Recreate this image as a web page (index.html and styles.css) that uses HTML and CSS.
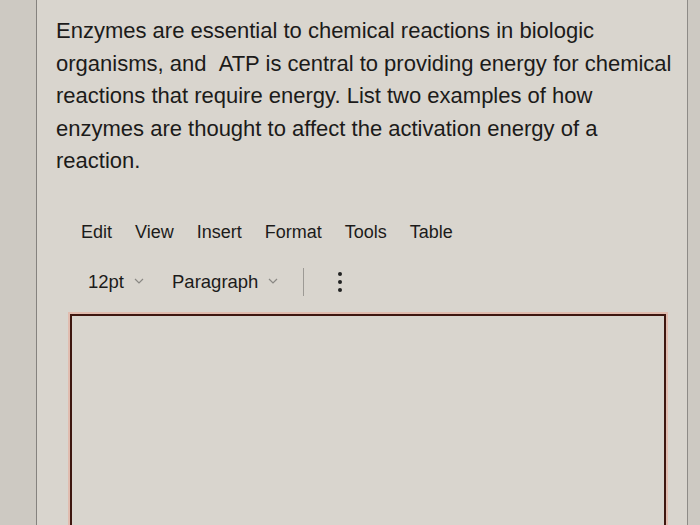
FILE: index.html
```html
<!DOCTYPE html>
<html lang="en">
<head>
    <meta charset="UTF-8">
    <meta name="viewport" content="width=device-width, initial-scale=1.0">
    <title>Question</title>
    <link rel="stylesheet" href="styles.css">
</head>
<body>
    <div class="panel">
        <p class="question">
            Enzymes are essential to chemical reactions in biologic<br>
            organisms, and &nbsp;ATP is central to providing energy for chemical<br>
            reactions that require energy. List two examples of how<br>
            enzymes are thought to affect the activation energy of a<br>
            reaction.
        </p>

        <div class="menu">
            <span>Edit</span>
            <span>View</span>
            <span>Insert</span>
            <span>Format</span>
            <span>Tools</span>
            <span>Table</span>
        </div>

        <div class="toolbar">
            <span class="drop size">12pt
                <svg class="chev" width="10" height="6" viewBox="0 0 10 6"><path d="M1 1l4 4 4-4" fill="none" stroke="#8a8884" stroke-width="1.2"/></svg>
            </span>
            <span class="drop para">Paragraph
                <svg class="chev" width="10" height="6" viewBox="0 0 10 6"><path d="M1 1l4 4 4-4" fill="none" stroke="#8a8884" stroke-width="1.2"/></svg>
            </span>
            <span class="sep"></span>
            <span class="more"><i></i><i></i><i></i></span>
        </div>

        <div class="editor"></div>
    </div>
</body>
</html>
```
FILE: styles.css
```css
body {
    margin: 0;
    background-color: #cdc9c2;
    font-family: "Liberation Sans", Arial, sans-serif;
    color: #1c1b1a;
    height: 525px;
    overflow: hidden;
}
.panel {
    margin-left: 36px;
    width: 652px;
    height: 525px;
    background-color: #d9d5ce;
    border-left: 1px solid #85827e;
    border-right: 1px solid #8e8b87;
    box-sizing: border-box;
    padding-top: 15px;
}
.question {
    margin: 0 0 0 19px;
    font-size: 22px;
    line-height: 32.5px;
}
.menu {
    display: flex;
    gap: 23px;
    margin: 42px 0 0 44px;
    font-size: 18px;
    line-height: 24px;
}
.toolbar {
    display: flex;
    align-items: center;
    margin: 23px 0 0 51px;
    font-size: 18.5px;
    height: 30px;
}
.drop {
    display: flex;
    align-items: center;
    gap: 10px;
}
.size {
    margin-right: 28px;
}
.para {
    margin-right: 25px;
}
.chev {
    margin-top: -2px;
}
.sep {
    width: 1px;
    height: 28px;
    background-color: #9d9a95;
    margin-right: 34px;
}
.more {
    display: flex;
    flex-direction: column;
    gap: 4px;
}
.more i {
    width: 4px;
    height: 4px;
    border-radius: 50%;
    background-color: #222;
}
.editor {
    margin: 17px 0 0 33px;
    width: 592px;
    height: 220px;
    border: 2px solid #3e1710;
    box-shadow: 0 0 0 2px rgba(232, 168, 150, 0.55);
}
```
